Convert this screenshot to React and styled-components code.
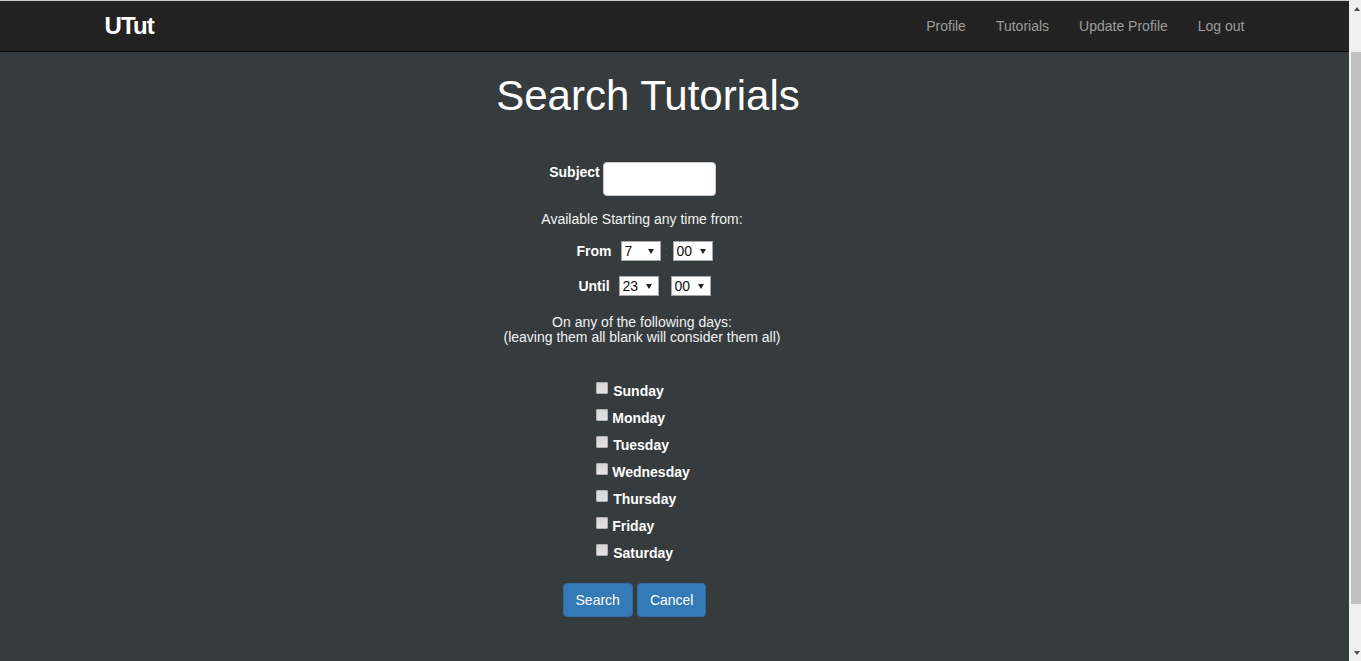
import React from "react";
import styled, { createGlobalStyle } from "styled-components";

const GlobalStyle = createGlobalStyle`
  html, body {
    margin: 0;
    padding: 0;
    height: 100%;
    overflow: hidden;
  }
  body {
    font-family: "Liberation Sans", Arial, Helvetica, sans-serif;
    font-size: 14px;
    line-height: 20px;
    color: #ffffff;
    background: #363b3e;
  }
  * { box-sizing: border-box; }
`;

const Screen = styled.div`
  display: flex;
  width: 100vw;
  height: 100vh;
`;

const Page = styled.div`
  flex: 1;
  min-width: 0;
  display: flex;
  flex-direction: column;
  background: #363b3e;
`;

const NavBar = styled.nav`
  height: 52px;
  background: #222222;
  border-top: 1px solid #cdcdcd;
  border-bottom: 1px solid #080808;
`;

const NavContainer = styled.div`
  width: 1170px;
  height: 50px;
  margin: 0 auto;
  padding: 0 15px;
  display: flex;
  align-items: center;
  justify-content: space-between;
`;

const Brand = styled.a`
  font-size: 24px;
  font-weight: 700;
  letter-spacing: -0.9px;
  color: #ffffff;
  text-decoration: none;
  line-height: 24px;
`;

const NavLinks = styled.ul`
  display: flex;
  list-style: none;
  margin: 0 -15px 0 0;
  padding: 0;
`;

const NavLink = styled.a`
  display: block;
  padding: 15px;
  line-height: 20px;
  color: #9d9d9d;
  text-decoration: none;
`;

const Main = styled.main`
  display: flex;
  flex-direction: column;
  align-items: center;
  padding-right: 65px;
`;

const Title = styled.h1`
  margin: 21px 0 0;
  padding-left: 12px;
  font-size: 42px;
  font-weight: 400;
  line-height: 1.1;
  color: #ffffff;
`;

const SubjectRow = styled.div`
  display: flex;
  align-items: flex-start;
  gap: 3px;
  margin-top: 43px;
  margin-right: 19px;
`;

const FieldLabel = styled.label`
  font-weight: 700;
  line-height: 20px;
  color: #ffffff;
`;

const TextInput = styled.input`
  width: 113px;
  height: 34px;
  border: 1px solid #cccccc;
  border-radius: 4px;
  background: #ffffff;
  padding: 6px 12px;
  font: inherit;
  color: #555;
  outline: none;
`;

const Note = styled.p`
  margin: ${(p) => p.$top}px 0 0;
  text-align: center;
  color: #f2f2f2;
  line-height: ${(p) => p.$lh || 20}px;
`;

const TimeRow = styled.div`
  display: flex;
  align-items: center;
  height: 20px;
  margin-top: ${(p) => p.$top}px;
  margin-left: 5px;
`;

const TimeLabel = styled.label`
  font-weight: 700;
  margin-right: 9px;
`;

const SelectWrap = styled.span`
  position: relative;
  display: inline-block;
  width: 40px;
  height: 20px;
`;

const Select = styled.select`
  appearance: none;
  -webkit-appearance: none;
  width: 100%;
  height: 100%;
  border: 1px solid #a6a6a6;
  border-radius: 0;
  background: #ffffff;
  color: #111;
  font-family: "Liberation Sans", Arial, sans-serif;
  font-size: 14px;
  line-height: 18px;
  padding: 0 0 0 3px;
  outline: none;
`;

const Caret = styled.span`
  position: absolute;
  right: 7px;
  top: 8px;
  width: 0;
  height: 0;
  border-left: 3px solid transparent;
  border-right: 3px solid transparent;
  border-top: 5px solid #222;
  pointer-events: none;
`;

const Colon = styled.span`
  width: 12px;
  text-align: center;
  color: #464b4e;
`;

const DayList = styled.div`
  display: flex;
  flex-direction: column;
  align-items: flex-start;
  margin-top: 32px;
  margin-left: 2px;
`;

const DayRow = styled.label`
  display: flex;
  align-items: center;
  height: 27px;
  font-weight: 700;
  color: #ffffff;
`;

const Check = styled.input`
  appearance: none;
  -webkit-appearance: none;
  width: 12px;
  height: 12px;
  margin: 0 ${(p) => p.$gap}px 5px 0;
  border: 1px solid #b0b0b0;
  border-radius: 1px;
  background: linear-gradient(#d6d6d6, #e4e4e4);
`;

const ButtonRow = styled.div`
  display: flex;
  gap: 4px;
  margin-top: 17px;
  margin-right: 15px;
`;

const Button = styled.button`
  height: 34px;
  padding: 6px 12px;
  border: 1px solid #2e6da4;
  border-radius: 4px;
  background: #337ab7;
  color: #ffffff;
  font-family: "Liberation Sans", Arial, sans-serif;
  font-size: 14px;
  line-height: 20px;
  cursor: pointer;
`;

const Rail = styled.div`
  width: 12px;
  height: 100vh;
  background: #f0f0f0;
  display: flex;
  flex-direction: column;
`;

const RailButton = styled.div`
  height: 17px;
  display: flex;
  align-items: flex-start;
  padding: 7px 0 0 5px;
`;

const Triangle = styled.span`
  width: 0;
  height: 0;
  border-left: 3.5px solid transparent;
  border-right: 3.5px solid transparent;
  ${(p) =>
    p.$down
      ? "border-top: 4px solid #505050;"
      : "border-bottom: 4px solid #505050;"}
`;

const Track = styled.div`
  flex: 1;
  padding-top: 35px;
`;

const Thumb = styled.div`
  height: 552px;
  margin-left: 2px;
  background: #c1c1c1;
`;

const hours = Array.from({ length: 24 }, (_, i) => String(i));
const minutes = ["00", "15", "30", "45"];
const days = [
  ["Sunday", 5],
  ["Monday", 4],
  ["Tuesday", 5],
  ["Wednesday", 4],
  ["Thursday", 5],
  ["Friday", 4],
  ["Saturday", 5],
];

function TimeSelect({ value, options }) {
  return (
    <SelectWrap>
      <Select defaultValue={value}>
        {options.map((o) => (
          <option key={o} value={o}>
            {o}
          </option>
        ))}
      </Select>
      <Caret />
    </SelectWrap>
  );
}

export default function App() {
  return (
    <>
      <GlobalStyle />
      <Screen>
        <Page>
          <NavBar>
            <NavContainer>
              <Brand href="#">UTut</Brand>
              <NavLinks>
                {["Profile", "Tutorials", "Update Profile", "Log out"].map((l) => (
                  <li key={l}>
                    <NavLink href="#">{l}</NavLink>
                  </li>
                ))}
              </NavLinks>
            </NavContainer>
          </NavBar>
          <Main>
            <Title>Search Tutorials</Title>
            <SubjectRow>
              <FieldLabel htmlFor="subject">Subject</FieldLabel>
              <TextInput id="subject" type="text" />
            </SubjectRow>
            <Note $top={13}>Available Starting any time from:</Note>
            <TimeRow $top={12}>
              <TimeLabel>From</TimeLabel>
              <TimeSelect value="7" options={hours} />
              <Colon>:</Colon>
              <TimeSelect value="00" options={minutes} />
            </TimeRow>
            <TimeRow $top={15}>
              <TimeLabel>Until</TimeLabel>
              <TimeSelect value="23" options={hours} />
              <Colon>:</Colon>
              <TimeSelect value="00" options={minutes} />
            </TimeRow>
            <Note $top={19} $lh={15}>
              On any of the following days:
              <br />
              (leaving them all blank will consider them all)
            </Note>
            <DayList>
              {days.map(([d, g]) => (
                <DayRow key={d}>
                  <Check type="checkbox" $gap={g} />
                  {d}
                </DayRow>
              ))}
            </DayList>
            <ButtonRow>
              <Button type="button">Search</Button>
              <Button type="button">Cancel</Button>
            </ButtonRow>
          </Main>
        </Page>
        <Rail>
          <RailButton>
            <Triangle />
          </RailButton>
          <Track>
            <Thumb />
          </Track>
          <RailButton>
            <Triangle $down />
          </RailButton>
        </Rail>
      </Screen>
    </>
  );
}
